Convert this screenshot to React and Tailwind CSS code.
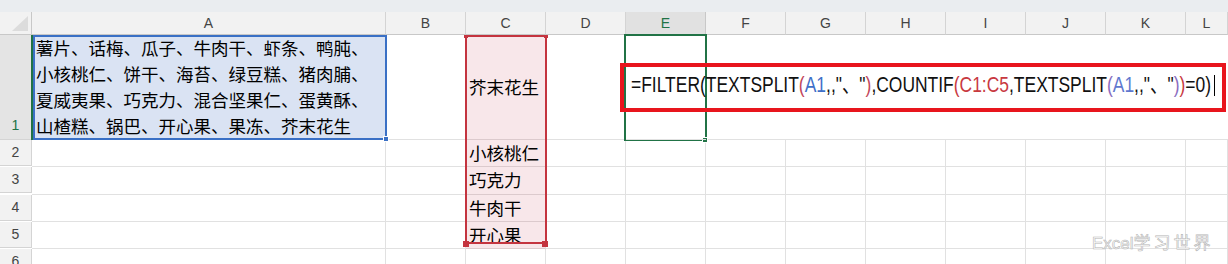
import React from "react";

const CJK = "font-['Noto_Sans_CJK_SC','Noto_Sans_CJK_JP',sans-serif]";
const LAT = "font-['Liberation_Sans','Noto_Sans_CJK_SC',sans-serif]";

const COLS = ["A", "B", "C", "D", "E", "F", "G", "H", "I", "J", "K", "L"];

const A1_LINES = [
  "薯片、话梅、瓜子、牛肉干、虾条、鸭肫、",
  "小核桃仁、饼干、海苔、绿豆糕、猪肉脯、",
  "夏威夷果、巧克力、混合坚果仁、蛋黄酥、",
  "山楂糕、锅巴、开心果、果冻、芥末花生",
];

const C_LIST = ["小核桃仁", "巧克力", "牛肉干", "开心果"];

// formula pieces with their colours
const FORMULA = [
  ["=FILTER(TEXTSPLIT", "text-[#111]"],
  ["(", "text-[#c2455a]"],
  ["A1", "text-[#3f6fc8]"],
  [",,\"、\"", "text-[#111]"],
  [")", "text-[#c2455a]"],
  [",COUNTIF", "text-[#111]"],
  ["(C1:C5", "text-[#c8393f]"],
  [",TEXTSPLIT", "text-[#111]"],
  ["(", "text-[#8a6cc0]"],
  ["A1", "text-[#5f78cf]"],
  [",,\"、\"", "text-[#111]"],
  [")", "text-[#8a6cc0]"],
  [")", "text-[#c8393f]"],
  ["=0)", "text-[#111]"],
];

const Cell = ({ className = "", children }) => (
  <div className={`border-b border-[#e1e1e1] ${className}`}>{children}</div>
);

const RowHead = ({ n, selected, className = "" }) => (
  <div
    className={`flex justify-center border-r border-b border-[#d4d4d4] text-[14px] ${LAT} ${
      selected ? "bg-[#e4e4e4] text-[#217346]" : "bg-[#f2f2f2] text-[#444]"
    } ${className}`}
  >
    {n}
  </div>
);

const App = () => {
  return (
    <div className="relative w-[1228px] h-[264px] overflow-hidden bg-white">
      {/* strip above the headers */}
      <div className="h-[12px] bg-[#eaedf0]" />

      <div className="grid grid-cols-[32px_354px_repeat(10,80px)_42px]">
        {/* column headers */}
        <div className="relative h-[23px] bg-[#f2f2f2] border-r border-b border-[#c8c8c8]">
          <svg className="absolute right-[3px] bottom-[3px]" width="16" height="15" viewBox="0 0 16 15">
            <polygon points="16,0 16,15 0,15" fill="#dcdcdc" />
          </svg>
        </div>
        {COLS.map((c) => (
          <div
            key={c}
            className={`flex items-center justify-center h-[23px] border-r border-b text-[14px] ${LAT} ${
              c === "E"
                ? "bg-[#e1e1e1] text-[#217346] border-r-[#c8c8c8] border-b-[#c8c8c8]"
                : "bg-[#f2f2f2] text-[#444] border-[#d4d4d4] border-b-[#c8c8c8]"
            }`}
          >
            {c}
          </div>
        ))}

        {/* row 1 */}
        <RowHead n="1" selected className="h-[105px] items-end pb-[3px]" />
        <Cell className={`bg-[#dae3f3] pl-[4px] text-[17.5px] leading-[26px] text-black whitespace-nowrap ${CJK}`}>
          {A1_LINES.map((l) => (
            <div key={l}>{l}</div>
          ))}
        </Cell>
        <Cell className="border-r" />
        <Cell className={`flex items-center bg-[#f8e7ea] pl-[3px] text-[17.5px] text-black border-b-[#dccacd] ${CJK}`}>
          芥末花生
        </Cell>
        <Cell className="border-r" />
        <Cell className="relative z-10 flex items-center pl-[5px] pb-[5px]">
          <span className={`inline-block origin-left scale-x-[0.793] whitespace-nowrap text-[22px] ${LAT}`}>
            {FORMULA.map(([t, col], i) => (
              <span key={i} className={col}>
                {t}
              </span>
            ))}
          </span>
        </Cell>
        {COLS.slice(5).map((c) => (
          <Cell key={c} />
        ))}

        {/* rows 2 - 6 */}
        {[2, 3, 4, 5, 6].map((r) => (
          <React.Fragment key={r}>
            <RowHead n={r} className="h-[26px] items-center" />
            {COLS.map((c) => {
              const inC = c === "C" && r <= 5;
              return (
                <Cell
                  key={c}
                  className={`border-r ${
                    inC
                      ? `flex items-center bg-[#f8e7ea] pl-[3px] text-[17.5px] text-black border-b-[#dccacd] ${CJK}`
                      : ""
                  }`}
                >
                  {inC ? C_LIST[r - 2] : null}
                </Cell>
              );
            })}
          </React.Fragment>
        ))}
      </div>

      {/* selection overlays */}
      <div className="absolute left-[31px] top-[35px] w-[2px] h-[105px] bg-[#217346]" />
      <div className="absolute left-[33px] top-[35px] w-[354px] h-[105px] border-2 border-[#3a70c5]" />
      <div className="absolute left-[383px] top-[136px] w-[6px] h-[6px] bg-[#3a70c5] border border-white" />

      <div className="absolute left-[465px] top-[35px] w-[82px] h-[209px] border-2 border-[#c4343f]" />
      <div className="absolute left-[464px] top-[35px] w-[4px] h-[3px] bg-[#c4343f]" />
      <div className="absolute left-[544px] top-[35px] w-[4px] h-[3px] bg-[#c4343f]" />
      <div className="absolute left-[463px] top-[241px] w-[6px] h-[6px] bg-[#c4343f]" />
      <div className="absolute left-[542px] top-[241px] w-[6px] h-[6px] bg-[#c4343f]" />

      <div className="absolute left-[624px] top-[34px] w-[83px] h-[107px] border-2 border-[#217346]" />
      <div className="absolute left-[702px] top-[137px] w-[6px] h-[6px] bg-[#217346] border border-white" />

      {/* highlighted formula box */}
      <div className="absolute z-20 left-[620px] top-[63px] w-[606px] h-[49px] border-4 border-[#e8151d]" />
      <div className="absolute z-20 left-[1214px] top-[75px] w-px h-[21px] bg-black" />

      {/* watermark */}
      <div
        className={`absolute z-20 left-[1092px] top-[229px] text-[17px] text-white whitespace-nowrap [-webkit-text-stroke:0.6px_#b5b5b5] ${LAT}`}
      >
        Excel<span className={`tracking-[3px] ${CJK}`}>学习世界</span>
      </div>
    </div>
  );
};

export default App;
